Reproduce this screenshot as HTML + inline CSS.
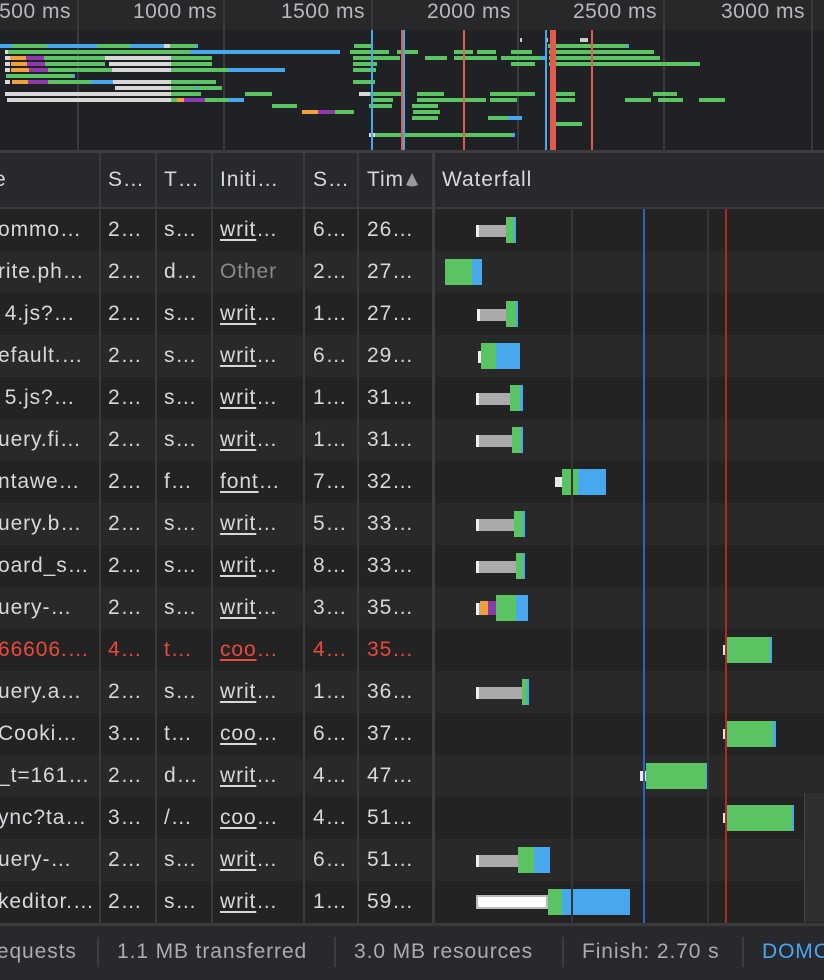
<!DOCTYPE html>
<html><head><meta charset="utf-8"><style>
*{margin:0;padding:0;box-sizing:border-box}
html,body{width:824px;height:980px;overflow:hidden}
body{background:#232323;font-family:"Liberation Sans",sans-serif;font-size:21px;letter-spacing:0.9px;color:#d5d8dd;position:relative}
.a{position:absolute}
.t{position:absolute;white-space:nowrap;line-height:42px}
u{text-decoration:underline;text-underline-offset:3px}
</style></head><body>
<div class="a" style="left:0;top:0;width:824px;height:30px;background:#28282a"></div>
<div class="a" style="left:0;top:30px;width:824px;height:120px;background:#202124"></div>
<div id="ov"></div>
<div class="a" style="left:0;top:150px;width:824px;height:3px;background:#3d3d3d"></div>
<div class="a" style="left:0;top:153px;width:824px;height:55px;background:#28292c"></div>
<div class="a" style="left:0;top:207px;width:824px;height:2px;background:#3a3a3a"></div>
<div id="rows"></div>
<div class="a" style="left:0;top:923px;width:824px;height:3px;background:#3a3a3a"></div>
<div class="a" style="left:0;top:926px;width:824px;height:54px;background:#28292c;color:#a9acb0"></div>
<div class="t" style="left:-11px;top:931px;color:#a9acb0">requests</div>
<div class="a" style="left:97px;top:937px;width:2px;height:30px;background:#3d3d3d"></div>
<div class="t" style="left:117px;top:931px;color:#a9acb0">1.1 MB transferred</div>
<div class="a" style="left:334px;top:937px;width:2px;height:30px;background:#3d3d3d"></div>
<div class="t" style="left:354px;top:931px;color:#a9acb0">3.0 MB resources</div>
<div class="a" style="left:562px;top:937px;width:2px;height:30px;background:#3d3d3d"></div>
<div class="t" style="left:582px;top:931px;color:#a9acb0">Finish: 2.70 s</div>
<div class="a" style="left:742px;top:937px;width:2px;height:30px;background:#3d3d3d"></div>
<div class="a" style="left:762px;top:931px;width:62px;height:42px;overflow:hidden"><div class="t" style="left:0;top:0;color:#4aa6ec">DOMContentLoaded</div></div>
<script>
var C={g:'#5ac462',b:'#48a8ee',w:'#d8d8d8',o:'#f2a03c',p:'#8e3aab',G:'#aaaaaa'};
var h='';
function R(x,y,w,hh,c){h+='<div class="a" style="left:'+x+'px;top:'+y+'px;width:'+w+'px;height:'+hh+'px;background:'+c+'"></div>';}
[77,223,371,517,663,811].forEach(function(x){R(x,0,2,150,'#3a3a3c')});
[['500 ms',77],['1000 ms',223],['1500 ms',371],['2000 ms',517],['2500 ms',663],['3000 ms',811]].forEach(function(l){h+='<div class="t" style="right:'+(824-l[1]+6)+'px;top:-9px;color:#b5b8bd;letter-spacing:0.5px">'+l[0]+'</div>';});
var ov=[
[44,[['b',0,12],['g',12,47],['b',47,97],['g',97,130],['b',130,164],['w',164,170],['g',170,196],['b',196,198],['g',354,373],['g',548,627],['b',627,629]]],
[50,[['w',5,8],['g',8,190],['b',190,340],['g',350,389],['g',397,418],['g',454,473],['g',477,496],['g',511,532],['g',549,654]]],
[56,[['w',5,10],['o',10,26],['p',26,44],['g',44,105],['w',105,171],['g',171,212],['g',353,400],['g',425,447],['g',454,497],['g',501,541],['b',541,545],['g',549,660]]],
[62,[['w',5,10],['o',11,27],['p',27,45],['g',45,105],['w',109,171],['g',171,212],['g',353,377],['g',511,535],['g',549,700]]],
[68,[['w',5,10],['o',11,29],['p',29,48],['g',48,112],['w',112,171],['g',171,228],['b',228,285],['g',353,376]]],
[74,[['g',6,73],['b',73,75]]],
[80,[['w',5,10],['o',12,28],['p',28,48],['g',48,91],['b',91,113],['w',113,171],['g',171,216],['g',353,375]]],
[86,[['w',115,171],['g',171,196],['b',196,200],['g',198,222]]],
[92,[['w',5,171],['g',171,201],['g',245,272],['w',359,370],['g',370,404],['g',417,444],['g',490,535],['g',556,575],['g',653,677]]],
[98,[['w',7,171],['g',171,177],['o',177,184],['p',184,205],['g',205,228],['b',228,244],['g',371,393],['g',417,486],['g',490,517],['g',550,575],['g',625,651],['g',658,683],['g',699,725]]],
[104,[['g',272,297],['g',369,392],['g',412,438]]],
[110,[['o',302,318],['p',318,335],['g',335,354],['g',413,440]]],
[116,[['g',412,438],['g',488,508],['b',508,522]]],
[122,[['g',556,582]]],
[133,[['w',369,375],['g',375,512],['b',512,515]]]
];
ov.forEach(function(r){r[1].forEach(function(s){R(s[1],r[0],s[2]-s[1],4,C[s[0]])})});
R(520,38,2,4,'#ccc');R(546,38,2,4,'#ccc');R(580,38,8,4,'#ccc');R(591,38,2,4,'#ccc');
[[371,'#48a8ee',2],[401,'#e05a4e',2],[403,'#48a8ee',2],[463,'#e05a4e',2],[545,'#48a8ee',2],[550,'#e05a4e',6],[591,'#e05a4e',2]].forEach(function(l){R(l[0],30,l[2],120,l[1])});
document.getElementById('ov').innerHTML=h;h='';
var d=[
['ommo…','2…','s…','writ','6…','26…',[['G',476,506],['g',506,514],['b',514,516]]],
['rite.ph…','2…','d…','Other','2…','27…',[['w',443,445],['g',445,472],['b',472,482]]],
['&nbsp;4.js?…','2…','s…','writ','1…','27…',[['G',477,506],['g',506,516],['b',516,518]]],
['efault.…','2…','s…','writ','6…','29…',[['G',478,481],['g',481,496],['b',496,520]]],
['&nbsp;5.js?…','2…','s…','writ','1…','31…',[['G',476,510],['g',510,520],['b',520,523]]],
['uery.fi…','2…','s…','writ','1…','31…',[['G',476,512],['g',512,521],['b',521,523]]],
['ntawe…','2…','f…','font','7…','32…',[['W',555,562],['g',562,578],['b',578,606]]],
['uery.b…','2…','s…','writ','5…','33…',[['G',476,514],['g',514,523],['b',523,525]]],
['oard_s…','2…','s…','writ','8…','33…',[['G',476,516],['g',516,523],['b',523,525]]],
['uery-…','2…','s…','writ','3…','35…',[['G',476,480],['o',480,488],['p',488,496],['g',496,516],['b',516,528]]],
['66606.…','4…','t…','coo','4…','35…',[['W',723,726],['g',726,770],['b',770,772]]],
['uery.a…','2…','s…','writ','1…','36…',[['G',476,522],['g',522,527],['b',527,529]]],
['Cooki…','3…','t…','coo','6…','37…',[['W',723,726],['g',726,773],['b',773,776]]],
['_t=161…','2…','d…','writ','4…','47…',[['W',640,646],['g',646,706],['b',706,709]]],
['ync?ta…','3…','/…','coo','4…','51…',[['W',723,726],['g',726,792],['b',792,794]]],
['uery-…','2…','s…','writ','6…','51…',[['G',476,518],['g',518,534],['b',534,550]]],
['keditor.…','2…','s…','writ','1…','59…',[['WW',476,548],['g',548,562],['b',562,630]]]
];
d.forEach(function(r,i){
 var y=209+42*i, red=i==10;
 R(0,y,824,42,i%2?'#292929':'#232323');
 var col=red?'#ea4a3e':'#d5d8dd';
 var xs=[-2,108,164,220,313,367];
 for(var k=0;k<6;k++){
  var txt=r[k];
  if(k==3){txt=(txt=='Other')?'<span style="color:#8a8a8a">Other</span>':'<u>'+txt+'</u>…';}
  h+='<div class="t" style="left:'+xs[k]+'px;top:'+y+'px;color:'+col+'">'+txt+'</div>';
 }
 r[6].forEach(function(s){
  var c=s[0],x=s[1],w=s[2]-s[1];
  if(c=='g'||c=='b')R(x,y+8,w,26,C[c]);
  else if(c=='o'||c=='p')R(x,y+14,w,14,C[c]);
  else if(c=='G'){R(x,y+16,w,12,'#aaaaaa');R(x,y+16,3,12,'#eee');}
  else if(c=='W')R(x,y+16,w,10,'#e8e8e8');
  else if(c=='WW'){R(x,y+14,w,14,'#bbb');R(x+2,y+16,w-4,10,'#fff');}
 });
});
[99,155,211,303,357].forEach(function(x){R(x,153,2,770,'#3a3a3a')});
R(432,153,3,770,'#3e3e3e');
[571,707].forEach(function(x){R(x,209,2,714,'#353535')});
R(643,209,2,714,'#2d62c4');R(725,209,2,714,'#b02a20');
R(804,793,20,129,'#2f2f2f');R(804,793,1,129,'#444');
[['e',-6],['S…',108],['T…',164],['Initi…',220],['S…',313],['Tim',367],['Waterfall',442]].forEach(function(l){h+='<div class="t" style="left:'+l[1]+'px;top:159px;color:#d5d8dd">'+l[0]+'</div>';});
h+='<svg class="a" style="left:404px;top:172px" width="16" height="16"><path d="M8 1 L14 13 Q8 16 2 13 Z" fill="#9a9a9a"/></svg>';
document.getElementById('rows').innerHTML=h;
</script>
</body></html>
